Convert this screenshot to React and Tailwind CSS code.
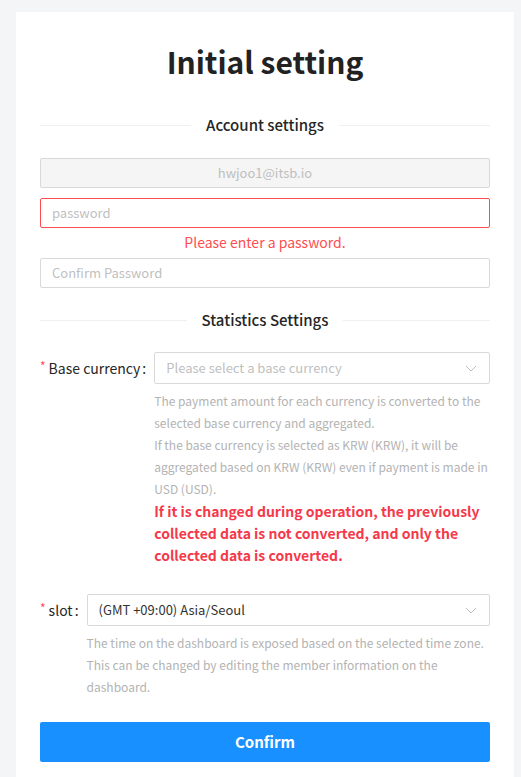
import React from "react";

const font = { fontFamily: '"Noto Sans CJK KR", "Noto Sans", sans-serif' };

function Divider({ children }) {
  return (
    <div className="flex items-center">
      <div className="h-px flex-1 bg-[#f0f0f0]" />
      <span className="px-[15px] text-[15px] leading-6 font-medium text-[#262626]">{children}</span>
      <div className="h-px flex-1 bg-[#f0f0f0]" />
    </div>
  );
}

function Chevron() {
  return (
    <svg width="12" height="7" viewBox="0 0 12 7" fill="none" className="text-[#bfbfbf]">
      <path d="M1 1l5 5 5-5" stroke="currentColor" strokeWidth="1" />
    </svg>
  );
}

function Label({ text }) {
  return (
    <div className="flex h-8 shrink-0 items-center text-sm text-[#262626]">
      <span className="mr-[3px] -translate-y-[2px] text-[12px] text-[#ff4d4f]">*</span>
      <span>{text}</span>
      <span className="ml-[2px] mr-2">:</span>
    </div>
  );
}

export default function App() {
  return (
    <div className="min-h-screen bg-[#f4f5f7] px-4 pt-3" style={font}>
      <div className="w-[498px] bg-white px-6 pt-[26px] pb-10">
        <h1 className="text-center text-[30px] leading-[46px] font-bold text-[#222]">
          Initial setting
        </h1>

        <div className="mt-[29px]">
          <Divider>Account settings</Divider>
        </div>

        <div className="mt-[21px] flex h-[30px] items-center justify-center rounded-[2px] border border-[#d9d9d9] bg-[#f5f5f5] text-[13px] text-[#bfbfbf]">
          hwjoo1@itsb.io
        </div>

        <div className="mt-[10px] flex h-[30px] items-center rounded-[2px] border border-[#ff4d4f] px-[11px] text-[13px] text-[#bfbfbf]">
          password
        </div>
        <p className="mt-[3px] text-center text-sm leading-[22px] text-[#ff4d4f]">
          Please enter a password.
        </p>

        <div className="mt-[5px] flex h-[30px] items-center rounded-[2px] border border-[#d9d9d9] px-[11px] text-[13px] text-[#bfbfbf]">
          Confirm Password
        </div>

        <div className="mt-5">
          <Divider>Statistics Settings</Divider>
        </div>

        <div className="mt-5 flex">
          <Label text="Base currency" />
          <div className="flex-1">
            <div className="flex h-8 items-center justify-between rounded-[2px] border border-[#d9d9d9] pl-[11px] pr-[12px] text-[13px] text-[#bfbfbf]">
              <span>Please select a base currency</span>
              <Chevron />
            </div>
            <div className="mt-[6px] text-[12px] leading-[22px] text-[#b3b3b3]">
              <p>
                The payment amount for each currency is converted to the selected base currency
                and aggregated.
              </p>
              <p>
                If the base currency is selected as KRW (KRW), it will be aggregated based on KRW
                (KRW) even if payment is made in USD (USD).
              </p>
              <p className="text-sm leading-[22px] font-bold text-[#f5394a]">
                If it is changed during operation, the previously collected data is not converted,
                and only the collected data is converted.
              </p>
            </div>
          </div>
        </div>

        <div className="mt-7 flex">
          <Label text="slot" />
          <div className="flex-1">
            <div className="flex h-8 items-center justify-between rounded-[2px] border border-[#d9d9d9] pl-[11px] pr-[12px] text-[13px] text-[#333]">
              <span>(GMT +09:00) Asia/Seoul</span>
              <Chevron />
            </div>
            <p className="mt-[6px] text-[12px] leading-[22px] text-[#b3b3b3]">
              The time on the dashboard is exposed based on the selected time zone. This can be
              changed by editing the member information on the dashboard.
            </p>
          </div>
        </div>

        <button className="mt-6 flex h-10 w-full items-center justify-center rounded-[2px] bg-[#1890ff] text-[15px] font-bold text-white">
          Confirm
        </button>
      </div>
    </div>
  );
}
